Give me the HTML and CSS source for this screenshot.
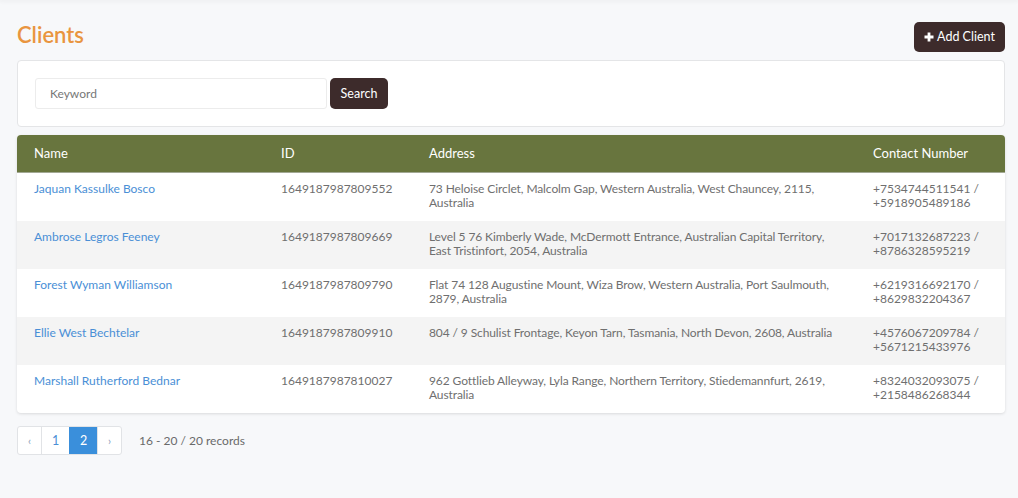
FILE: index.html
```html
<!DOCTYPE html>
<html lang="en">
<head>
<meta charset="utf-8">
<title>Clients</title>
<link rel="stylesheet" href="styles.css">
</head>
<body>
<div class="topbar"></div>
<main class="page">
  <div class="page-head">
    <h1 class="title">Clients</h1>
    <button class="btn btn-dark add-btn"><svg class="plus" viewBox="0 0 10 10" width="10" height="10"><path d="M3.6 0.5h2.8v3.1h3.1v2.8H6.4v3.1H3.6V6.4H0.5V3.6h3.1z" fill="#fff"/></svg>Add Client</button>
  </div>
  <section class="card search-card">
    <div class="search-row">
      <input class="keyword" type="text" placeholder="Keyword">
      <button class="btn btn-dark search-btn">Search</button>
    </div>
  </section>
  <section class="card table-card">
    <table class="clients">
      <colgroup>
        <col class="c-name"><col class="c-id"><col class="c-addr"><col class="c-contact">
      </colgroup>
      <thead>
        <tr><th>Name</th><th>ID</th><th>Address</th><th>Contact Number</th></tr>
      </thead>
      <tbody>
        <tr><td><a href="#">Jaquan Kassulke Bosco</a></td><td>1649187987809552</td><td class="addr">73 Heloise Circlet, Malcolm Gap, Western Australia, West Chauncey, 2115, Australia</td><td>+7534744511541 / +5918905489186</td></tr>
        <tr><td><a href="#">Ambrose Legros Feeney</a></td><td>1649187987809669</td><td class="addr">Level 5 76 Kimberly Wade, McDermott Entrance, Australian Capital Territory, East Tristinfort, 2054, Australia</td><td>+7017132687223 / +8786328595219</td></tr>
        <tr><td><a href="#">Forest Wyman Williamson</a></td><td>1649187987809790</td><td class="addr">Flat 74 128 Augustine Mount, Wiza Brow, Western Australia, Port Saulmouth, 2879, Australia</td><td>+6219316692170 / +8629832204367</td></tr>
        <tr><td><a href="#">Ellie West Bechtelar</a></td><td>1649187987809910</td><td class="addr">804 / 9 Schulist Frontage, Keyon Tarn, Tasmania, North Devon, 2608, Australia</td><td>+4576067209784 / +5671215433976</td></tr>
        <tr><td><a href="#">Marshall Rutherford Bednar</a></td><td>1649187987810027</td><td class="addr">962 Gottlieb Alleyway, Lyla Range, Northern Territory, Stiedemannfurt, 2619, Australia</td><td>+8324032093075 / +2158486268344</td></tr>
      </tbody>
    </table>
  </section>
  <div class="pager-row">
    <nav class="pager">
      <a class="pg pg-arrow" href="#">&lsaquo;</a>
      <a class="pg" href="#">1</a>
      <a class="pg active" href="#">2</a>
      <a class="pg pg-arrow" href="#">&rsaquo;</a>
    </nav>
    <span class="records">16 - 20 / 20 records</span>
  </div>
</main>
</body>
</html>
```
FILE: styles.css
```css
* { box-sizing: border-box; }
html, body { margin: 0; padding: 0; }
body {
  background: #f7f8fa;
  font-family: Lato, "Noto Sans", sans-serif;
  color: #6c6c6c;
  font-size: 12px;
  height: 498px;
  overflow: hidden;
}
.topbar {
  height: 0;
  box-shadow: 0 0 4px 1px rgba(0,0,0,0.08);
}
.page {
  padding: 22px 13px 0 17px;
}
.page-head {
  display: flex;
  justify-content: space-between;
  align-items: flex-start;
  height: 38px;
}
.title {
  margin: 0;
  padding-top: 1px;
  font-size: 22px;
  font-weight: 600;
  color: #e9953f;
  line-height: 24px;
}
.btn {
  border: 0;
  border-radius: 5px;
  font-family: inherit;
  cursor: pointer;
}
.btn-dark {
  background: #3d2b2b;
  color: #fff;
}
.add-btn {
  height: 30px;
  width: 91px;
  font-size: 12.5px;
  display: flex;
  align-items: center;
  justify-content: center;
  gap: 3px;
  padding: 0 0 1px 0;
}
.plus { display: block; }
.card {
  background: #fff;
  border: 1px solid #e4e5e7;
  border-radius: 4px;
}
.search-card {
  height: 67px;
  padding: 17px 17px;
}
.search-row {
  display: flex;
  gap: 3px;
}
.keyword {
  width: 292px;
  height: 31px;
  border: 1px solid #ececec;
  border-radius: 3px;
  padding: 0 14px;
  font-family: inherit;
  font-size: 12px;
  color: #555;
  outline: none;
}
.keyword::placeholder { color: #777; }
.search-btn {
  width: 58px;
  height: 31px;
  font-size: 12.5px;
}
.table-card {
  margin-top: 8px;
  border: 0;
  border-radius: 4px;
  overflow: hidden;
  box-shadow: 0 1px 3px rgba(0,0,0,0.12);
}
.clients {
  width: 100%;
  border-collapse: collapse;
  table-layout: fixed;
}
.c-name { width: 247px; }
.c-id { width: 148px; }
.c-addr { width: 444px; }
.c-contact { width: 149px; }
.clients th {
  background: #68753e;
  color: #fff;
  font-weight: 400;
  font-size: 13px;
  text-align: left;
  height: 37px;
  padding: 0 17px 1px 17px;
  border-bottom: 1px solid #a2a894;
}
.clients td {
  height: 48px;
  padding: 9px 17px 11px 17px;
  vertical-align: top;
  line-height: 14px;
  color: #6f6f6f;
  font-size: 12px;
}
.clients td.addr { letter-spacing: -0.1px; }
.clients tbody tr:nth-child(even) td { background: #f4f4f4; }
.clients a {
  color: #4a8fd6;
  text-decoration: none;
}
.pager-row {
  margin-top: 13px;
  display: flex;
  align-items: center;
  gap: 17px;
}
.pager {
  display: flex;
  border: 1px solid #e1e3e6;
  border-radius: 3px;
  background: #fff;
  overflow: hidden;
}
.pg {
  height: 27px;
  width: 28px;
  display: flex;
  align-items: center;
  justify-content: center;
  text-decoration: none;
  color: #4a8fd6;
  font-size: 12.5px;
  border-left: 1px solid #e1e3e6;
}
.pg:first-child { border-left: 0; width: 23px; }
.pg-arrow { color: #8aa0b8; font-size: 11px; width: 24px; }
.pg.active { background: #3a8fdb; color: #fff; border-left-color: #3a8fdb; }
.records { color: #6a6a6a; font-size: 12px; }
```
